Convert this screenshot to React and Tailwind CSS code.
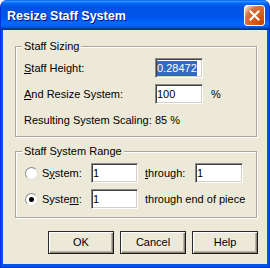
import React from "react";

function CloseButton() {
  return (
    <div className="flex h-[21px] w-[21px] items-center justify-center rounded-[3px] border border-white bg-[radial-gradient(circle_at_90%_90%,#cc4600_0%,#dc6527_55%,#cd7546_70%,#ffccb2_90%,#ffffff_100%)]">
      <svg width="11" height="11" viewBox="0 0 11 11">
        <path d="M1.5 1.5 L9.5 9.5 M9.5 1.5 L1.5 9.5" stroke="#fff" strokeWidth="2" strokeLinecap="square" />
      </svg>
    </div>
  );
}

function Field({ children, className = "" }) {
  return (
    <div
      className={`flex h-[20px] shrink-0 items-center border border-t-[#8a8a8a] border-l-[#8a8a8a] border-b-white border-r-white bg-white pl-px shadow-[inset_1px_1px_0_#404040,inset_-1px_-1px_0_#d4d0c8] ${className}`}
    >
      {children}
    </div>
  );
}

function Radio({ checked }) {
  return (
    <span className="flex h-[13px] w-[13px] shrink-0 items-center justify-center rounded-full border border-t-[#8a8a8a] border-l-[#8a8a8a] border-b-[#e0ded4] border-r-[#e0ded4] bg-white">
      {checked && <span className="h-[5px] w-[5px] rounded-full bg-black" />}
    </span>
  );
}

function Group({ title, className = "", children }) {
  return (
    <div
      className={`relative ml-[12px] w-[242px] border border-[#aca899] shadow-[inset_1px_1px_0_#fff,1px_1px_0_#fff] ${className}`}
    >
      <span className="absolute -top-[7px] left-[6px] bg-[#ece9d8] px-[2px] leading-[13px]">{title}</span>
      {children}
    </div>
  );
}

function Button({ children }) {
  return (
    <button className="flex h-[23px] w-[66px] items-center justify-center border border-t-[#2a2a2a] border-l-[#2a2a2a] border-b-[#1a1a1a] border-r-[#1a1a1a] bg-[#ece9d8] shadow-[inset_1px_1px_0_#fff,inset_-1px_-1px_0_#8a8778,inset_-2px_-2px_0_#b8b5a6]">
      {children}
    </button>
  );
}

export default function App() {
  return (
    <div
      className="h-[268px] w-[270px] bg-white text-[11px] text-black"
      style={{ fontFamily: '"Liberation Sans", Arial, sans-serif' }}
    >
      <div className="flex h-full flex-col overflow-hidden rounded-t-[7px] border border-t-0 border-[#0831d9] bg-[#0454e6]">
        <div className="flex h-[30px] shrink-0 items-center justify-between pl-[6px] pr-[4px] bg-[linear-gradient(to_bottom,#0058ee_0%,#3593ff_4%,#288eff_6%,#127dff_8%,#036ffc_10%,#0262ee_14%,#0057e5_20%,#0054e3_24%,#0055eb_56%,#005bf5_66%,#026afe_76%,#0062ef_86%,#0052d6_92%,#0040ab_94%,#003092_100%)]">
          <span className="mt-[2px] text-[12.5px] font-bold text-white [text-shadow:1px_1px_0_#0f1089]">
            Resize Staff System
          </span>
          <CloseButton />
        </div>

        <div className="mx-[2px] mb-[3px] flex flex-1 flex-col bg-[#ece9d8]">
          <Group title="Staff Sizing" className="mt-[16px] h-[91px]">
            <div className="flex flex-col pl-[8px] pt-[11px]">
              <div className="flex items-center">
                <span className="w-[131px] shrink-0">
                  <u>S</u>taff Height:
                </span>
                <Field className="w-[48px]">
                  <span className="bg-[#316ac5] leading-[15px] text-white">0.28472</span>
                </Field>
              </div>
              <div className="mt-[6px] flex items-center">
                <span className="w-[131px] shrink-0">
                  <u>A</u>nd Resize System:
                </span>
                <Field className="w-[48px]">100</Field>
                <span className="ml-[8px]">%</span>
              </div>
              <div className="mt-[10px] flex items-center leading-[13px]">
                <span className="w-[131px] shrink-0 whitespace-nowrap">Resulting System Scaling:</span>
                <span>85 %</span>
              </div>
            </div>
          </Group>

          <Group title="Staff System Range" className="mt-[14px] h-[67px]">
            <div className="flex flex-col pl-[9px] pt-[11px]">
              <div className="flex items-center">
                <Radio />
                <span className="ml-[4px] w-[49px] shrink-0">
                  S<u>y</u>stem:
                </span>
                <Field className="w-[47px]">1</Field>
                <span className="ml-[7px] w-[50px] shrink-0">
                  <u>t</u>hrough:
                </span>
                <Field className="w-[48px]">1</Field>
              </div>
              <div className="mt-[6px] flex items-center">
                <Radio checked />
                <span className="ml-[4px] w-[49px] shrink-0">
                  Syste<u>m</u>:
                </span>
                <Field className="w-[47px]">1</Field>
                <span className="ml-[7px] whitespace-nowrap">through end of piece</span>
              </div>
            </div>
          </Group>

          <div className="mt-[13px] flex justify-end gap-[6px] pr-[9px]">
            <Button>OK</Button>
            <Button>Cancel</Button>
            <Button>Help</Button>
          </div>
        </div>
      </div>
    </div>
  );
}
